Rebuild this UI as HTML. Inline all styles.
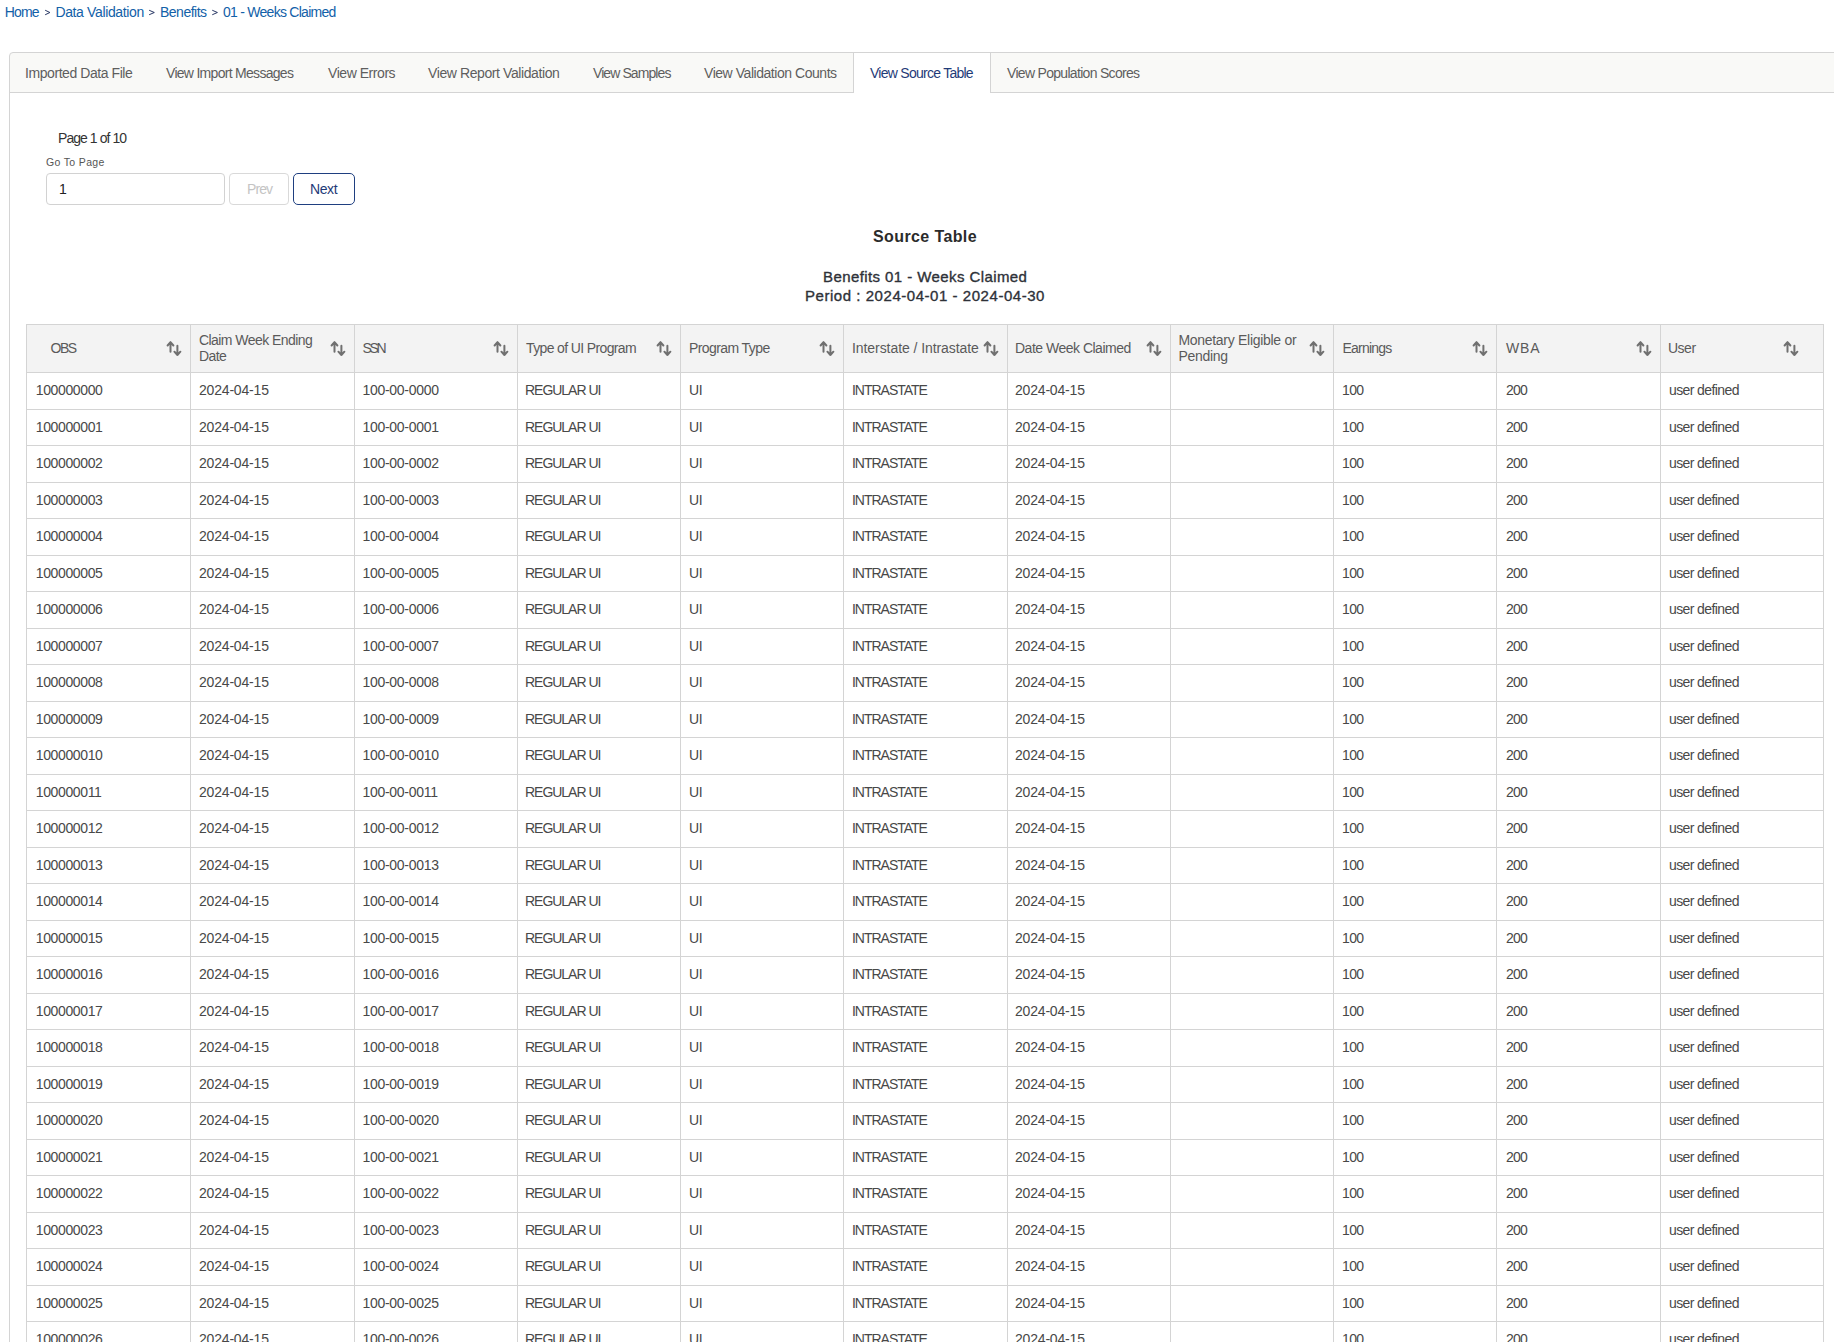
<!DOCTYPE html>
<html><head><meta charset="utf-8"><title>Source Table</title>
<style>
html,body{margin:0;padding:0;background:#fff;width:1834px;height:1342px;overflow:hidden;}
#root{width:1834px;height:1342px;overflow:hidden;position:relative;}
body{font-family:"Liberation Sans",sans-serif;font-size:14px;color:#333;}
.t{position:absolute;white-space:nowrap;line-height:normal;}
.tabs{position:absolute;left:9px;top:52px;width:1840px;height:39px;background:#f9f9f7;border:1px solid #d4d4d4;border-radius:4px 0 0 0;}
.panel{position:absolute;left:9px;top:92px;width:1px;height:1300px;background:#d4d4d4;}
.activebox{position:absolute;left:853px;top:52px;width:136px;height:40px;background:#fff;border-left:1px solid #d4d4d4;border-right:1px solid #d4d4d4;border-top:1px solid #d4d4d4;}
.inp{position:absolute;left:46px;top:173px;width:177px;height:30px;border:1px solid #d2d2d2;border-radius:4px;}
.btn{position:absolute;top:173px;height:30px;border-radius:4px;}
.prevb{left:229px;width:58px;border:1px solid #d9d9d9;}
.nextb{left:293px;width:60px;border:1px solid #1f3f80;height:30px;border-radius:5px;}
table{position:absolute;left:26px;top:324px;width:1798px;border-collapse:collapse;table-layout:fixed;}
th,td{border:1px solid #d4d4d4;padding:0;text-align:left;vertical-align:middle;white-space:nowrap;}
th{background:#f3f3f3;height:46px;padding-bottom:1px !important;font-weight:normal;color:#5a5a5a;position:relative;line-height:16px;}
td{height:34.5px;padding-bottom:1px !important;color:#484848;}
td.c0{padding-left:8.80px;letter-spacing:-0.375px}td.c1{padding-left:8.00px;letter-spacing:-0.189px}td.c2{padding-left:7.40px;letter-spacing:-0.280px}td.c3{padding-left:7.00px;letter-spacing:-1.022px}td.c4{padding-left:8.00px;letter-spacing:-0.300px}td.c5{padding-left:8.00px;letter-spacing:-1.022px}td.c6{padding-left:7.00px;letter-spacing:-0.189px}td.c7{padding-left:9.00px;letter-spacing:-0.300px}td.c8{padding-left:8.00px;letter-spacing:-0.600px}td.c9{padding-left:9.00px;letter-spacing:-0.800px}td.c10{padding-left:8.00px;letter-spacing:-0.600px}
.si{position:absolute;right:8px;top:15px;}
th.c10 .si{right:24px;}
</style></head><body><div id="root">
<svg style="position:absolute;left:0;top:0" width="260" height="24"><g fill="none" stroke="#1c2c5c" stroke-width="0.95" stroke-linecap="round" stroke-linejoin="round"><path d="M45.5 10.4L49.9 12.5L45.5 14.6"/><path d="M149.5 10.4L154.3 12.5L149.5 14.6"/><path d="M212.6 10.4L217.4 12.5L212.6 14.6"/></g></svg>
<div class="tabs"></div>
<div class="panel"></div>
<div class="activebox"></div>
<div class="inp"></div>
<div class="btn prevb"></div>
<div class="btn nextb"></div>
<div class="t" id="bc_home" style="left:4.80px;top:4.00px;font-size:14px;letter-spacing:-0.900px;color:#1261a8;">Home</div>
<div class="t" id="bc_dv" style="left:55.40px;top:4.00px;font-size:14px;letter-spacing:-0.357px;color:#1261a8;">Data Validation</div>
<div class="t" id="bc_ben" style="left:160.00px;top:4.00px;font-size:14px;letter-spacing:-0.500px;color:#1261a8;">Benefits</div>
<div class="t" id="bc_wk" style="left:223.00px;top:4.00px;font-size:14px;letter-spacing:-0.735px;color:#1261a8;">01 - Weeks Claimed</div>
<div class="t" id="tab1" style="left:25.00px;top:65.00px;font-size:14px;letter-spacing:-0.432px;color:#5e5e5e;">Imported Data File</div>
<div class="t" id="tab2" style="left:166.00px;top:65.00px;font-size:14px;letter-spacing:-0.708px;color:#5e5e5e;">View Import Messages</div>
<div class="t" id="tab3" style="left:328.00px;top:65.00px;font-size:14px;letter-spacing:-0.450px;color:#5e5e5e;">View Errors</div>
<div class="t" id="tab4" style="left:428.00px;top:65.00px;font-size:14px;letter-spacing:-0.407px;color:#5e5e5e;">View Report Validation</div>
<div class="t" id="tab5" style="left:593.00px;top:65.00px;font-size:14px;letter-spacing:-0.914px;color:#5e5e5e;">View Samples</div>
<div class="t" id="tab6" style="left:704.00px;top:65.00px;font-size:14px;letter-spacing:-0.455px;color:#5e5e5e;">View Validation Counts</div>
<div class="t" id="tab7" style="left:870.00px;top:65.00px;font-size:14px;letter-spacing:-0.737px;color:#1f3b78;">View Source Table</div>
<div class="t" id="tab8" style="left:1007.00px;top:65.00px;font-size:14px;letter-spacing:-0.693px;color:#5e5e5e;">View Population Scores</div>
<div class="t" id="pg" style="left:58.00px;top:130.00px;font-size:14px;letter-spacing:-0.945px;color:#333;">Page 1 of 10</div>
<div class="t" id="gtp" style="left:46.00px;top:156.00px;font-size:10.5px;letter-spacing:0.344px;color:#555;">Go To Page</div>
<div class="t" id="inpv" style="left:59.00px;top:181.00px;font-size:14px;letter-spacing:0.000px;color:#222;">1</div>
<div class="t" id="prev" style="left:247.00px;top:181.00px;font-size:14px;letter-spacing:-0.933px;color:#c4c4c4;">Prev</div>
<div class="t" id="next" style="left:310.00px;top:181.00px;font-size:14px;letter-spacing:-0.400px;color:#1f3b78;">Next</div>
<div class="t" id="title" style="left:873.00px;top:228.00px;font-size:16px;letter-spacing:0.391px;color:#2b2b2b;font-weight:bold;">Source Table</div>
<div class="t" id="sub1" style="left:823.00px;top:268.00px;font-size:15px;letter-spacing:0.415px;color:#2e3138;-webkit-text-stroke:0.35px #2e3138;">Benefits 01 - Weeks Claimed</div>
<div class="t" id="sub2" style="left:805.00px;top:287.00px;font-size:15px;letter-spacing:0.542px;color:#2e3138;-webkit-text-stroke:0.35px #2e3138;">Period : 2024-04-01 - 2024-04-30</div>
<table><colgroup><col style="width:164px"><col style="width:164px"><col style="width:163px"><col style="width:163px"><col style="width:163px"><col style="width:164px"><col style="width:163px"><col style="width:163px"><col style="width:163px"><col style="width:164px"><col style="width:163px"></colgroup><thead><tr><th style="padding-left:23.60px;letter-spacing:-1.500px" class="c0">OBS<svg class="si" width="16" height="17" viewBox="0 0 16 17"><g fill="none" stroke="#707070" stroke-width="2" stroke-linecap="round" stroke-linejoin="round"><path d="M4.5 2.2V11.8M1.6 5.5L4.5 2.2L7.4 5.5"/><path d="M11.4 5.8V15M8.4 11.7L11.4 15L14.4 11.7"/></g></svg></th><th style="padding-left:8.00px;letter-spacing:-0.562px" class="c1">Claim Week Ending<br>Date<svg class="si" width="16" height="17" viewBox="0 0 16 17"><g fill="none" stroke="#707070" stroke-width="2" stroke-linecap="round" stroke-linejoin="round"><path d="M4.5 2.2V11.8M1.6 5.5L4.5 2.2L7.4 5.5"/><path d="M11.4 5.8V15M8.4 11.7L11.4 15L14.4 11.7"/></g></svg></th><th style="padding-left:7.40px;letter-spacing:-2.250px" class="c2">SSN<svg class="si" width="16" height="17" viewBox="0 0 16 17"><g fill="none" stroke="#707070" stroke-width="2" stroke-linecap="round" stroke-linejoin="round"><path d="M4.5 2.2V11.8M1.6 5.5L4.5 2.2L7.4 5.5"/><path d="M11.4 5.8V15M8.4 11.7L11.4 15L14.4 11.7"/></g></svg></th><th style="padding-left:8.00px;letter-spacing:-0.629px" class="c3">Type of UI Program<svg class="si" width="16" height="17" viewBox="0 0 16 17"><g fill="none" stroke="#707070" stroke-width="2" stroke-linecap="round" stroke-linejoin="round"><path d="M4.5 2.2V11.8M1.6 5.5L4.5 2.2L7.4 5.5"/><path d="M11.4 5.8V15M8.4 11.7L11.4 15L14.4 11.7"/></g></svg></th><th style="padding-left:8.00px;letter-spacing:-0.591px" class="c4">Program Type<svg class="si" width="16" height="17" viewBox="0 0 16 17"><g fill="none" stroke="#707070" stroke-width="2" stroke-linecap="round" stroke-linejoin="round"><path d="M4.5 2.2V11.8M1.6 5.5L4.5 2.2L7.4 5.5"/><path d="M11.4 5.8V15M8.4 11.7L11.4 15L14.4 11.7"/></g></svg></th><th style="padding-left:8.00px;letter-spacing:-0.068px" class="c5">Interstate / Intrastate<svg class="si" width="16" height="17" viewBox="0 0 16 17"><g fill="none" stroke="#707070" stroke-width="2" stroke-linecap="round" stroke-linejoin="round"><path d="M4.5 2.2V11.8M1.6 5.5L4.5 2.2L7.4 5.5"/><path d="M11.4 5.8V15M8.4 11.7L11.4 15L14.4 11.7"/></g></svg></th><th style="padding-left:7.00px;letter-spacing:-0.500px" class="c6">Date Week Claimed<svg class="si" width="16" height="17" viewBox="0 0 16 17"><g fill="none" stroke="#707070" stroke-width="2" stroke-linecap="round" stroke-linejoin="round"><path d="M4.5 2.2V11.8M1.6 5.5L4.5 2.2L7.4 5.5"/><path d="M11.4 5.8V15M8.4 11.7L11.4 15L14.4 11.7"/></g></svg></th><th style="padding-left:7.40px;letter-spacing:-0.289px" class="c7">Monetary Eligible or<br>Pending<svg class="si" width="16" height="17" viewBox="0 0 16 17"><g fill="none" stroke="#707070" stroke-width="2" stroke-linecap="round" stroke-linejoin="round"><path d="M4.5 2.2V11.8M1.6 5.5L4.5 2.2L7.4 5.5"/><path d="M11.4 5.8V15M8.4 11.7L11.4 15L14.4 11.7"/></g></svg></th><th style="padding-left:8.40px;letter-spacing:-0.757px" class="c8">Earnings<svg class="si" width="16" height="17" viewBox="0 0 16 17"><g fill="none" stroke="#707070" stroke-width="2" stroke-linecap="round" stroke-linejoin="round"><path d="M4.5 2.2V11.8M1.6 5.5L4.5 2.2L7.4 5.5"/><path d="M11.4 5.8V15M8.4 11.7L11.4 15L14.4 11.7"/></g></svg></th><th style="padding-left:9.00px;letter-spacing:0.800px" class="c9">WBA<svg class="si" width="16" height="17" viewBox="0 0 16 17"><g fill="none" stroke="#707070" stroke-width="2" stroke-linecap="round" stroke-linejoin="round"><path d="M4.5 2.2V11.8M1.6 5.5L4.5 2.2L7.4 5.5"/><path d="M11.4 5.8V15M8.4 11.7L11.4 15L14.4 11.7"/></g></svg></th><th style="padding-left:7.00px;letter-spacing:-0.500px" class="c10">User<svg class="si" width="16" height="17" viewBox="0 0 16 17"><g fill="none" stroke="#707070" stroke-width="2" stroke-linecap="round" stroke-linejoin="round"><path d="M4.5 2.2V11.8M1.6 5.5L4.5 2.2L7.4 5.5"/><path d="M11.4 5.8V15M8.4 11.7L11.4 15L14.4 11.7"/></g></svg></th></tr></thead><tbody>
<tr><td class="c0">100000000</td><td class="c1">2024-04-15</td><td class="c2">100-00-0000</td><td class="c3">REGULAR UI</td><td class="c4">UI</td><td class="c5">INTRASTATE</td><td class="c6">2024-04-15</td><td class="c7"></td><td class="c8">100</td><td class="c9">200</td><td class="c10">user defined</td></tr>
<tr><td class="c0">100000001</td><td class="c1">2024-04-15</td><td class="c2">100-00-0001</td><td class="c3">REGULAR UI</td><td class="c4">UI</td><td class="c5">INTRASTATE</td><td class="c6">2024-04-15</td><td class="c7"></td><td class="c8">100</td><td class="c9">200</td><td class="c10">user defined</td></tr>
<tr><td class="c0">100000002</td><td class="c1">2024-04-15</td><td class="c2">100-00-0002</td><td class="c3">REGULAR UI</td><td class="c4">UI</td><td class="c5">INTRASTATE</td><td class="c6">2024-04-15</td><td class="c7"></td><td class="c8">100</td><td class="c9">200</td><td class="c10">user defined</td></tr>
<tr><td class="c0">100000003</td><td class="c1">2024-04-15</td><td class="c2">100-00-0003</td><td class="c3">REGULAR UI</td><td class="c4">UI</td><td class="c5">INTRASTATE</td><td class="c6">2024-04-15</td><td class="c7"></td><td class="c8">100</td><td class="c9">200</td><td class="c10">user defined</td></tr>
<tr><td class="c0">100000004</td><td class="c1">2024-04-15</td><td class="c2">100-00-0004</td><td class="c3">REGULAR UI</td><td class="c4">UI</td><td class="c5">INTRASTATE</td><td class="c6">2024-04-15</td><td class="c7"></td><td class="c8">100</td><td class="c9">200</td><td class="c10">user defined</td></tr>
<tr><td class="c0">100000005</td><td class="c1">2024-04-15</td><td class="c2">100-00-0005</td><td class="c3">REGULAR UI</td><td class="c4">UI</td><td class="c5">INTRASTATE</td><td class="c6">2024-04-15</td><td class="c7"></td><td class="c8">100</td><td class="c9">200</td><td class="c10">user defined</td></tr>
<tr><td class="c0">100000006</td><td class="c1">2024-04-15</td><td class="c2">100-00-0006</td><td class="c3">REGULAR UI</td><td class="c4">UI</td><td class="c5">INTRASTATE</td><td class="c6">2024-04-15</td><td class="c7"></td><td class="c8">100</td><td class="c9">200</td><td class="c10">user defined</td></tr>
<tr><td class="c0">100000007</td><td class="c1">2024-04-15</td><td class="c2">100-00-0007</td><td class="c3">REGULAR UI</td><td class="c4">UI</td><td class="c5">INTRASTATE</td><td class="c6">2024-04-15</td><td class="c7"></td><td class="c8">100</td><td class="c9">200</td><td class="c10">user defined</td></tr>
<tr><td class="c0">100000008</td><td class="c1">2024-04-15</td><td class="c2">100-00-0008</td><td class="c3">REGULAR UI</td><td class="c4">UI</td><td class="c5">INTRASTATE</td><td class="c6">2024-04-15</td><td class="c7"></td><td class="c8">100</td><td class="c9">200</td><td class="c10">user defined</td></tr>
<tr><td class="c0">100000009</td><td class="c1">2024-04-15</td><td class="c2">100-00-0009</td><td class="c3">REGULAR UI</td><td class="c4">UI</td><td class="c5">INTRASTATE</td><td class="c6">2024-04-15</td><td class="c7"></td><td class="c8">100</td><td class="c9">200</td><td class="c10">user defined</td></tr>
<tr><td class="c0">100000010</td><td class="c1">2024-04-15</td><td class="c2">100-00-0010</td><td class="c3">REGULAR UI</td><td class="c4">UI</td><td class="c5">INTRASTATE</td><td class="c6">2024-04-15</td><td class="c7"></td><td class="c8">100</td><td class="c9">200</td><td class="c10">user defined</td></tr>
<tr><td class="c0">100000011</td><td class="c1">2024-04-15</td><td class="c2">100-00-0011</td><td class="c3">REGULAR UI</td><td class="c4">UI</td><td class="c5">INTRASTATE</td><td class="c6">2024-04-15</td><td class="c7"></td><td class="c8">100</td><td class="c9">200</td><td class="c10">user defined</td></tr>
<tr><td class="c0">100000012</td><td class="c1">2024-04-15</td><td class="c2">100-00-0012</td><td class="c3">REGULAR UI</td><td class="c4">UI</td><td class="c5">INTRASTATE</td><td class="c6">2024-04-15</td><td class="c7"></td><td class="c8">100</td><td class="c9">200</td><td class="c10">user defined</td></tr>
<tr><td class="c0">100000013</td><td class="c1">2024-04-15</td><td class="c2">100-00-0013</td><td class="c3">REGULAR UI</td><td class="c4">UI</td><td class="c5">INTRASTATE</td><td class="c6">2024-04-15</td><td class="c7"></td><td class="c8">100</td><td class="c9">200</td><td class="c10">user defined</td></tr>
<tr><td class="c0">100000014</td><td class="c1">2024-04-15</td><td class="c2">100-00-0014</td><td class="c3">REGULAR UI</td><td class="c4">UI</td><td class="c5">INTRASTATE</td><td class="c6">2024-04-15</td><td class="c7"></td><td class="c8">100</td><td class="c9">200</td><td class="c10">user defined</td></tr>
<tr><td class="c0">100000015</td><td class="c1">2024-04-15</td><td class="c2">100-00-0015</td><td class="c3">REGULAR UI</td><td class="c4">UI</td><td class="c5">INTRASTATE</td><td class="c6">2024-04-15</td><td class="c7"></td><td class="c8">100</td><td class="c9">200</td><td class="c10">user defined</td></tr>
<tr><td class="c0">100000016</td><td class="c1">2024-04-15</td><td class="c2">100-00-0016</td><td class="c3">REGULAR UI</td><td class="c4">UI</td><td class="c5">INTRASTATE</td><td class="c6">2024-04-15</td><td class="c7"></td><td class="c8">100</td><td class="c9">200</td><td class="c10">user defined</td></tr>
<tr><td class="c0">100000017</td><td class="c1">2024-04-15</td><td class="c2">100-00-0017</td><td class="c3">REGULAR UI</td><td class="c4">UI</td><td class="c5">INTRASTATE</td><td class="c6">2024-04-15</td><td class="c7"></td><td class="c8">100</td><td class="c9">200</td><td class="c10">user defined</td></tr>
<tr><td class="c0">100000018</td><td class="c1">2024-04-15</td><td class="c2">100-00-0018</td><td class="c3">REGULAR UI</td><td class="c4">UI</td><td class="c5">INTRASTATE</td><td class="c6">2024-04-15</td><td class="c7"></td><td class="c8">100</td><td class="c9">200</td><td class="c10">user defined</td></tr>
<tr><td class="c0">100000019</td><td class="c1">2024-04-15</td><td class="c2">100-00-0019</td><td class="c3">REGULAR UI</td><td class="c4">UI</td><td class="c5">INTRASTATE</td><td class="c6">2024-04-15</td><td class="c7"></td><td class="c8">100</td><td class="c9">200</td><td class="c10">user defined</td></tr>
<tr><td class="c0">100000020</td><td class="c1">2024-04-15</td><td class="c2">100-00-0020</td><td class="c3">REGULAR UI</td><td class="c4">UI</td><td class="c5">INTRASTATE</td><td class="c6">2024-04-15</td><td class="c7"></td><td class="c8">100</td><td class="c9">200</td><td class="c10">user defined</td></tr>
<tr><td class="c0">100000021</td><td class="c1">2024-04-15</td><td class="c2">100-00-0021</td><td class="c3">REGULAR UI</td><td class="c4">UI</td><td class="c5">INTRASTATE</td><td class="c6">2024-04-15</td><td class="c7"></td><td class="c8">100</td><td class="c9">200</td><td class="c10">user defined</td></tr>
<tr><td class="c0">100000022</td><td class="c1">2024-04-15</td><td class="c2">100-00-0022</td><td class="c3">REGULAR UI</td><td class="c4">UI</td><td class="c5">INTRASTATE</td><td class="c6">2024-04-15</td><td class="c7"></td><td class="c8">100</td><td class="c9">200</td><td class="c10">user defined</td></tr>
<tr><td class="c0">100000023</td><td class="c1">2024-04-15</td><td class="c2">100-00-0023</td><td class="c3">REGULAR UI</td><td class="c4">UI</td><td class="c5">INTRASTATE</td><td class="c6">2024-04-15</td><td class="c7"></td><td class="c8">100</td><td class="c9">200</td><td class="c10">user defined</td></tr>
<tr><td class="c0">100000024</td><td class="c1">2024-04-15</td><td class="c2">100-00-0024</td><td class="c3">REGULAR UI</td><td class="c4">UI</td><td class="c5">INTRASTATE</td><td class="c6">2024-04-15</td><td class="c7"></td><td class="c8">100</td><td class="c9">200</td><td class="c10">user defined</td></tr>
<tr><td class="c0">100000025</td><td class="c1">2024-04-15</td><td class="c2">100-00-0025</td><td class="c3">REGULAR UI</td><td class="c4">UI</td><td class="c5">INTRASTATE</td><td class="c6">2024-04-15</td><td class="c7"></td><td class="c8">100</td><td class="c9">200</td><td class="c10">user defined</td></tr>
<tr><td class="c0">100000026</td><td class="c1">2024-04-15</td><td class="c2">100-00-0026</td><td class="c3">REGULAR UI</td><td class="c4">UI</td><td class="c5">INTRASTATE</td><td class="c6">2024-04-15</td><td class="c7"></td><td class="c8">100</td><td class="c9">200</td><td class="c10">user defined</td></tr>
<tr><td class="c0">100000027</td><td class="c1">2024-04-15</td><td class="c2">100-00-0027</td><td class="c3">REGULAR UI</td><td class="c4">UI</td><td class="c5">INTRASTATE</td><td class="c6">2024-04-15</td><td class="c7"></td><td class="c8">100</td><td class="c9">200</td><td class="c10">user defined</td></tr>
</tbody></table>
</div></body></html>
